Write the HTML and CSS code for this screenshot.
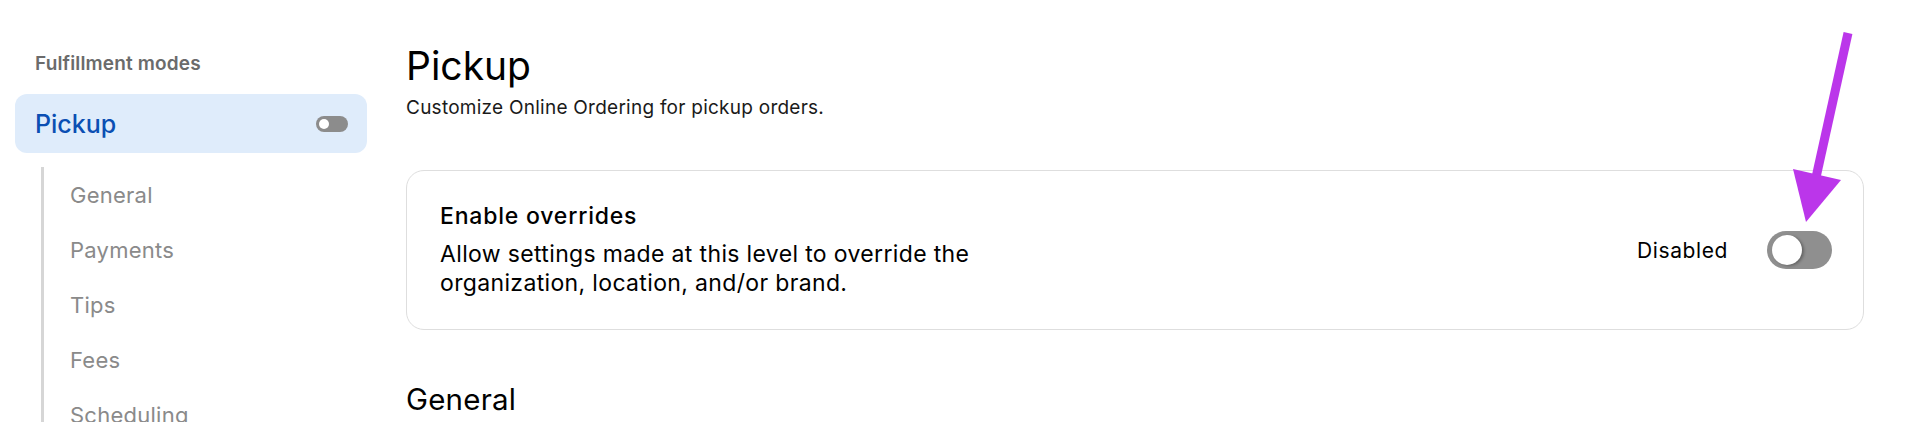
FILE: index.html
```html
<!DOCTYPE html>
<html lang="en">
<head>
<meta charset="utf-8">
<title>Pickup settings</title>
<link rel="stylesheet" href="styles.css">
</head>
<body>
<div class="page">
  <aside class="sidebar">
    <div class="side-heading">Fulfillment modes</div>
    <div class="mode-item active">
      <span class="mode-label">Pickup</span>
      <span class="mini-toggle"><span class="mini-knob"></span></span>
    </div>
    <ul class="sub-nav">
      <li>General</li>
      <li>Payments</li>
      <li>Tips</li>
      <li>Fees</li>
      <li>Scheduling</li>
    </ul>
  </aside>
  <main class="content">
    <h1 class="title">Pickup</h1>
    <p class="subtitle">Customize Online Ordering for pickup orders.</p>
    <section class="card">
      <div class="card-text">
        <div class="card-title">Enable overrides</div>
        <div class="card-desc">Allow settings made at this level to override the organization, location, and/or brand.</div>
      </div>
      <div class="card-control">
        <span class="status">Disabled</span>
        <span class="toggle"><span class="knob"></span></span>
      </div>
    </section>
    <h2 class="section-title">General</h2>
  </main>
</div>
<svg class="annotation" width="1918" height="422" viewBox="0 0 1918 422" aria-hidden="true">
  <line x1="1848" y1="33" x2="1815" y2="182" stroke="#bb36ea" stroke-width="9" stroke-linecap="butt"/>
  <polygon points="1793,169 1841,180 1806,222" fill="#bb36ea"/>
</svg>
</body>
</html>
```
FILE: styles.css
```css
* { box-sizing: border-box; }
html, body { margin: 0; padding: 0; background: #ffffff; }
body {
  font-family: Inter, "Noto Sans", "Liberation Sans", sans-serif;
  color: #111;
  height: 422px;
  overflow: hidden;
  position: relative;
}
.page {
  display: flex;
  align-items: flex-start;
}
.sidebar {
  width: 367px;
  padding: 52px 0 0 15px;
  flex: none;
}
.side-heading {
  font-size: 19px;
  line-height: 24px;
  font-weight: 600;
  letter-spacing: 0.15px;
  color: #6b6b6b;
  padding-left: 20px;
}
.mode-item {
  margin-top: 18px;
  height: 59px;
  border-radius: 12px;
  display: flex;
  align-items: center;
  justify-content: space-between;
  padding: 0 19px 0 20px;
}
.mode-item.active { background: #dfecfb; }
.mode-label {
  font-size: 25px;
  font-weight: 500;
  color: #0b4fb3;
}
.mini-toggle {
  width: 32px;
  height: 16px;
  border-radius: 8px;
  background: #8c8c8c;
  display: flex;
  align-items: center;
  padding-left: 3px;
}
.mini-knob {
  width: 10px;
  height: 10px;
  border-radius: 50%;
  background: #fff;
}
.sub-nav {
  list-style: none;
  margin: 14px 0 0 26px;
  padding: 1px 0 0 26px;
  border-left: 3px solid #d6d6d6;
}
.sub-nav li {
  font-size: 22px;
  line-height: 55px;
  letter-spacing: 0.25px;
  color: #8a8a8a;
}
.content {
  flex: 1;
  padding: 43px 54px 0 39px;
}
.title {
  margin: 0;
  font-size: 39px;
  line-height: 46px;
  font-weight: 400;
  color: #000;
}
.subtitle {
  margin: 7px 0 0;
  font-size: 19px;
  line-height: 24px;
  letter-spacing: 0.25px;
  color: #1a1a1a;
}
.card {
  margin-top: 50px;
  height: 160px;
  border: 1px solid #dedede;
  border-radius: 18px;
  display: flex;
  align-items: center;
  justify-content: space-between;
  padding: 0 31px 0 33px;
}
.card-title {
  font-size: 23px;
  line-height: 28px;
  font-weight: 500;
  letter-spacing: 0.8px;
  color: #000;
}
.card-desc {
  margin-top: 10px;
  width: 640px;
  font-size: 23px;
  line-height: 29px;
  letter-spacing: 0.35px;
  color: #000;
}
.card-control {
  display: flex;
  align-items: center;
  gap: 39px;
}
.status {
  font-size: 21px;
  letter-spacing: 0.6px;
  color: #000;
}
.toggle {
  width: 65px;
  height: 38px;
  border-radius: 19px;
  background: #8f8f8f;
  display: flex;
  align-items: center;
  padding-left: 5px;
}
.knob {
  width: 30px;
  height: 30px;
  border-radius: 50%;
  background: #fff;
  box-shadow: 2px 1px 3px rgba(0,0,0,0.3);
}
.section-title {
  margin: 51px 0 0;
  font-size: 29.5px;
  line-height: 36px;
  font-weight: 400;
  letter-spacing: 0.2px;
  color: #000;
}
.annotation {
  position: absolute;
  left: 0;
  top: 0;
  pointer-events: none;
}
```
